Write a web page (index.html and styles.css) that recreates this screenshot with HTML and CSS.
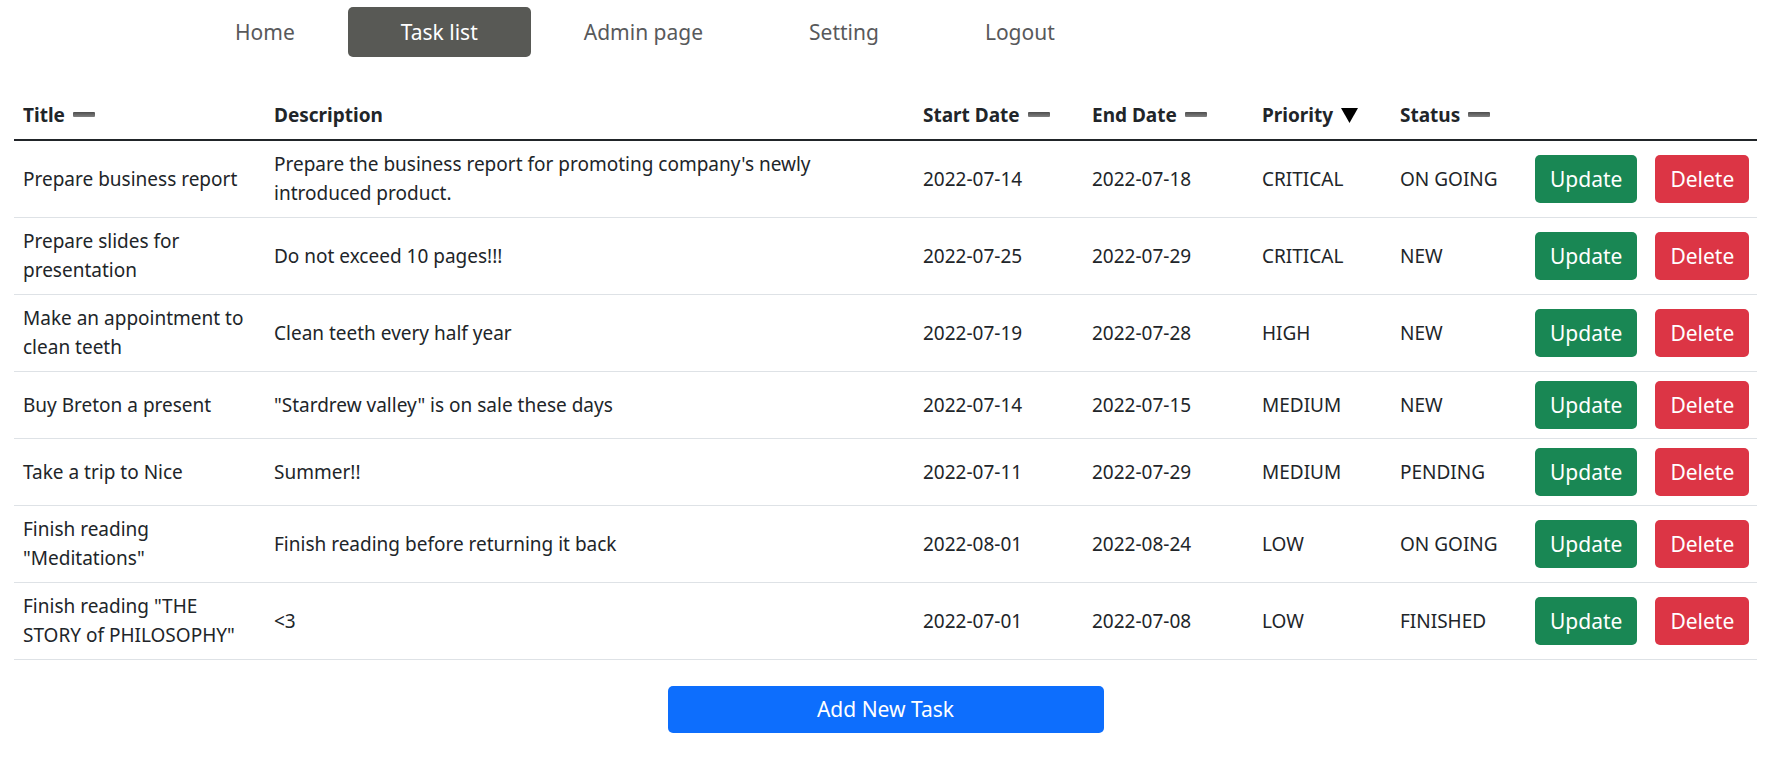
FILE: index.html
```html
<!DOCTYPE html>
<html lang="en">
<head>
<meta charset="utf-8">
<title>Task list</title>
<link rel="stylesheet" href="styles.css">
</head>
<body>
<nav class="nav">
  <a class="nav-link" href="#">Home</a>
  <a class="nav-link active" href="#">Task list</a>
  <a class="nav-link" href="#">Admin page</a>
  <a class="nav-link" href="#">Setting</a>
  <a class="nav-link" href="#">Logout</a>
</nav>
<main class="main">
  <table class="tasks">
    <colgroup>
      <col class="c-title"><col class="c-desc"><col class="c-start"><col class="c-end"><col class="c-prio"><col class="c-status"><col class="c-act">
    </colgroup>
    <thead>
      <tr>
        <th>Title <span class="dash"></span></th>
        <th>Description</th>
        <th>Start Date <span class="dash"></span></th>
        <th>End Date <span class="dash"></span></th>
        <th>Priority <svg class="tri" width="17" height="15" viewBox="0 0 17 15"><polygon points="0,0 17,0 8.5,15" fill="#000"/></svg></th>
        <th>Status <span class="dash"></span></th>
        <th></th>
      </tr>
    </thead>
    <tbody>
      <tr>
        <td>Prepare business report</td>
        <td>Prepare the business report for promoting company's newly<br>introduced product.</td>
        <td>2022-07-14</td><td>2022-07-18</td><td>CRITICAL</td><td>ON GOING</td>
        <td><div class="actions"><button class="btn btn-update">Update</button><button class="btn btn-delete">Delete</button></div></td>
      </tr>
      <tr>
        <td>Prepare slides for<br>presentation</td>
        <td>Do not exceed 10 pages!!!</td>
        <td>2022-07-25</td><td>2022-07-29</td><td>CRITICAL</td><td>NEW</td>
        <td><div class="actions"><button class="btn btn-update">Update</button><button class="btn btn-delete">Delete</button></div></td>
      </tr>
      <tr>
        <td>Make an appointment to<br>clean teeth</td>
        <td>Clean teeth every half year</td>
        <td>2022-07-19</td><td>2022-07-28</td><td>HIGH</td><td>NEW</td>
        <td><div class="actions"><button class="btn btn-update">Update</button><button class="btn btn-delete">Delete</button></div></td>
      </tr>
      <tr>
        <td>Buy Breton a present</td>
        <td>"Stardrew valley" is on sale these days</td>
        <td>2022-07-14</td><td>2022-07-15</td><td>MEDIUM</td><td>NEW</td>
        <td><div class="actions"><button class="btn btn-update">Update</button><button class="btn btn-delete">Delete</button></div></td>
      </tr>
      <tr>
        <td>Take a trip to Nice</td>
        <td>Summer!!</td>
        <td>2022-07-11</td><td>2022-07-29</td><td>MEDIUM</td><td>PENDING</td>
        <td><div class="actions"><button class="btn btn-update">Update</button><button class="btn btn-delete">Delete</button></div></td>
      </tr>
      <tr>
        <td>Finish reading<br>"Meditations"</td>
        <td>Finish reading before returning it back</td>
        <td>2022-08-01</td><td>2022-08-24</td><td>LOW</td><td>ON GOING</td>
        <td><div class="actions"><button class="btn btn-update">Update</button><button class="btn btn-delete">Delete</button></div></td>
      </tr>
      <tr>
        <td>Finish reading "THE<br>STORY of PHILOSOPHY"</td>
        <td>&lt;3</td>
        <td>2022-07-01</td><td>2022-07-08</td><td>LOW</td><td>FINISHED</td>
        <td><div class="actions"><button class="btn btn-update">Update</button><button class="btn btn-delete">Delete</button></div></td>
      </tr>
    </tbody>
  </table>
  <div class="add-row">
    <button class="btn btn-add">Add New Task</button>
  </div>
</main>
</body>
</html>
```

FILE: styles.css
```css
* { box-sizing: border-box; }

body {
  margin: 0;
  font-family: "Noto Sans", "Open Sans", sans-serif;
  font-size: 19px;
  line-height: 29px;
  color: #212529;
  background: #fff;
}

.nav {
  display: flex;
  padding: 7px 0 0 182px;
}

.nav-link {
  display: block;
  height: 50px;
  line-height: 50px;
  padding: 0 53px;
  font-size: 21px;
  color: #58595b;
  text-decoration: none;
  border-radius: 5px;
}

.nav-link.active {
  background: #585955;
  color: #fff;
}

.main {
  padding: 35px 27px 0 14px;
}

.tasks {
  width: 100%;
  border-collapse: collapse;
  table-layout: fixed;
}

.c-title { width: 251px; }
.c-desc { width: 649px; }
.c-start { width: 169px; }
.c-end { width: 170px; }
.c-prio { width: 138px; }
.c-status { width: 135px; }
.c-act { width: 231px; }

.tasks th {
  text-align: left;
  font-weight: 700;
  padding: 9px 9px;
  border-bottom: 2px solid #212529;
  white-space: nowrap;
}

.tasks td {
  padding: 9px 9px;
  vertical-align: middle;
  border-bottom: 1px solid #dee2e6;
}

.dash {
  display: inline-block;
  width: 22px;
  height: 5px;
  margin-left: 3px;
  vertical-align: 5px;
  border-radius: 1px;
  background: linear-gradient(#4e4e4e, #808080);
}

.tri {
  display: inline-block;
  margin-left: 3px;
  vertical-align: -1px;
}

.actions {
  display: flex;
  gap: 18px;
}

.btn {
  font-family: inherit;
  font-size: 21px;
  line-height: 1;
  height: 48px;
  border: 0;
  border-radius: 5px;
  color: #fff;
  padding: 0 15px;
  cursor: pointer;
}

.btn-update { background: #198754; }
.btn-delete { background: #dc3545; }

.add-row {
  display: flex;
  justify-content: center;
  padding-top: 26px;
}

.btn-add {
  width: 436px;
  height: 47px;
  background: #0d6efd;
}
```
